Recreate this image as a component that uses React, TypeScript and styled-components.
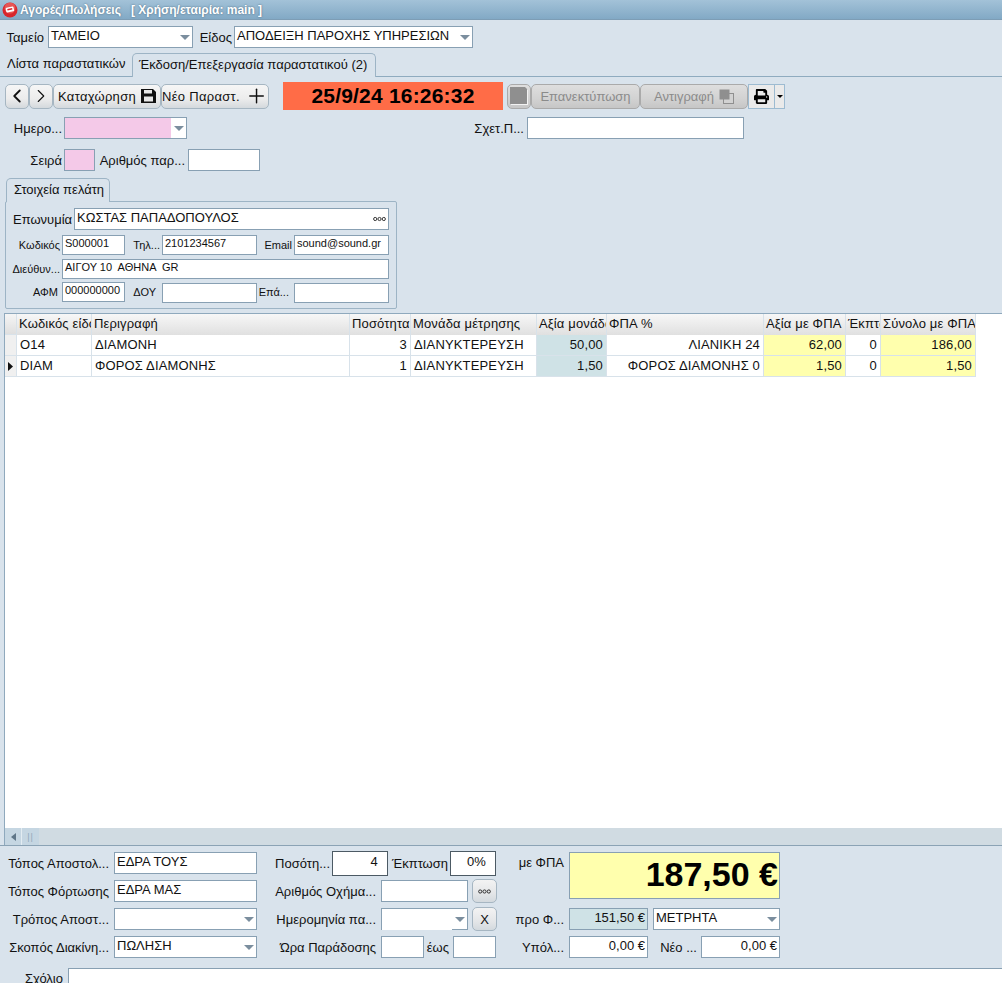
// Import libraries
import React from "react";
import styled, { createGlobalStyle } from "styled-components";
import { ChevronLeft, ChevronRight, Plus } from "lucide-react";
import { FaPrint } from "react-icons/fa";

// Styles
const GlobalStyle = createGlobalStyle`
  html, body {
    margin: 0;
    padding: 0;
    height: 983px;
    overflow: hidden;
    background: #d9e3ec;
    font-family: "Liberation Sans", Arial, sans-serif;
    font-size: 13px;
    color: #111;
  }
  * { box-sizing: border-box; }
`;

const Page = styled.div`
  width: 1002px;
  height: 983px;
  display: flex;
  flex-direction: column;
  overflow: hidden;
`;

const TitleBar = styled.div`
  height: 20px;
  flex: none;
  display: flex;
  align-items: center;
  gap: 2px;
  padding-left: 2px;
  background: linear-gradient(#a3c2d8, #82a9c5);
  border-bottom: 1px solid #7d9db5;
  color: #fff;
  font-size: 12px;
  font-weight: bold;
  white-space: pre;
  text-shadow: 0 0 2px #44647c;
`;

const FieldRow = styled.div<{ $top?: number; $left?: number }>`
  display: flex;
  flex: none;
  align-items: center;
  margin-top: ${(p) => p.$top ?? 0}px;
  margin-left: ${(p) => p.$left ?? 0}px;
`;

const Label = styled.span<{ $w?: number; $size?: number; $ml?: number }>`
  flex: none;
  width: ${(p) => (p.$w ? `${p.$w}px` : "auto")};
  margin-left: ${(p) => p.$ml ?? 0}px;
  text-align: right;
  font-size: ${(p) => p.$size ?? 13}px;
  white-space: nowrap;
`;

const Input = styled.div<{
  $w: number;
  $h?: number;
  $ml?: number;
  $mt?: number;
  $bg?: string;
  $size?: number;
  $right?: boolean;
  $dark?: boolean;
}>`
  flex: none;
  position: relative;
  width: ${(p) => p.$w}px;
  height: ${(p) => p.$h ?? 22}px;
  margin-left: ${(p) => p.$ml ?? 0}px;
  margin-top: ${(p) => p.$mt ?? 0}px;
  padding: 0 ${(p) => (p.$right ? 2 : 1)}px 0 ${(p) => (p.$right ? 0 : 2)}px;
  background: ${(p) => p.$bg ?? "#fff"};
  border: 1px solid ${(p) => (p.$dark ? "#4c5a64" : "#88a0b3")};
  font-size: ${(p) => p.$size ?? 13}px;
  line-height: ${(p) => (p.$h ?? 22) - 5}px;
  text-align: ${(p) => (p.$right ? "right" : "left")};
  white-space: pre;
  overflow: hidden;
`;

const DateInput = styled(Input)`
  border-bottom: none;
  &::after {
    content: "";
    position: absolute;
    right: 0;
    bottom: 0;
    width: 15px;
    height: 1px;
    background: #88a0b3;
  }
`;

const Arrow = styled.i`
  position: absolute;
  right: 2px;
  top: 8px;
  width: 0;
  height: 0;
  border-left: 5px solid transparent;
  border-right: 5px solid transparent;
  border-top: 5px solid #7b8e9e;
`;

const PinkFill = styled.div<{ $w: number }>`
  position: absolute;
  left: 0;
  top: 0;
  bottom: 0;
  width: ${(p) => p.$w}px;
  background: #f4c9e8;
`;

const TabStrip = styled.div`
  height: 24px;
  margin-top: 5px;
  flex: none;
  display: flex;
  align-items: flex-end;
  border-bottom: 1px solid #8fabbf;
  padding-left: 7px;
  white-space: nowrap;
`;

const PlainTab = styled.div`
  width: 125px;
  height: 23px;
  line-height: 22px;
`;

const ActiveTab = styled.div`
  height: 24px;
  width: 244px;
  line-height: 22px;
  padding-left: 6px;
  background: #d9e3ec;
  border: 1px solid #9db4c5;
  border-bottom: none;
  border-radius: 5px 5px 0 0;
  margin-bottom: -1px;
`;

const Toolbar = styled.div`
  display: flex;
  flex: none;
  align-items: center;
  height: 28px;
  margin-top: 5px;
  padding-left: 5px;
`;

const ToolButton = styled.button<{ $w: number; $disabled?: boolean }>`
  flex: none;
  width: ${(p) => p.$w}px;
  height: 25px;
  padding: 0;
  display: flex;
  align-items: center;
  justify-content: center;
  gap: 5px;
  font: 13px "Liberation Sans", Arial, sans-serif;
  letter-spacing: ${(p) => (p.$disabled ? 0 : 0.3)}px;
  white-space: nowrap;
  color: ${(p) => (p.$disabled ? "#8b8b8b" : "#111")};
  background: ${(p) =>
    p.$disabled
      ? "linear-gradient(#dedede, #d2d2d2 60%, #c6c6c6)"
      : "linear-gradient(#f6f6f6, #ececec 60%, #d4d9dd)"};
  border: 1px solid ${(p) => (p.$disabled ? "#aaaaaa" : "#a6b6c2")};
  border-radius: 5px;
`;

const Clock = styled.div`
  flex: none;
  width: 220px;
  height: 28px;
  margin: 0 4px 0 14px;
  background: #ff6c47;
  color: #000;
  font-size: 21px;
  font-weight: bold;
  letter-spacing: 0.2px;
  line-height: 27px;
  text-align: center;
`;

const PrintButton = styled.div`
  flex: none;
  width: 26px;
  height: 25px;
  display: flex;
  align-items: center;
  justify-content: center;
  background: #eaeaea;
  border: 1px solid #9dbbd1;
  border-right: none;
`;

const PrintMenu = styled.div`
  flex: none;
  width: 11px;
  height: 25px;
  display: flex;
  align-items: center;
  justify-content: center;
  background: #eaeaea;
  border: 1px solid #9dbbd1;
  &::after {
    content: "";
    border-left: 3px solid transparent;
    border-right: 3px solid transparent;
    border-top: 3px solid #000;
  }
`;

const CustomerTab = styled.div`
  flex: none;
  width: 104px;
  height: 24px;
  margin: 7px 0 -1px 6px;
  padding-left: 7px;
  line-height: 22px;
  background: #d9e3ec;
  border: 1px solid #9db4c5;
  border-bottom: none;
  border-radius: 5px 5px 0 0;
  position: relative;
  z-index: 1;
  white-space: nowrap;
`;

const CustomerPanel = styled.div`
  width: 392px;
  height: 108px;
  flex: none;
  margin-left: 5px;
  padding-top: 6px;
  border: 1px solid #9db4c5;
  border-radius: 2px;
`;

const Dots = styled.span`
  position: absolute;
  right: 2px;
  top: 50%;
  transform: translateY(-50%);
  display: flex;
`;

const Grid = styled.div`
  margin-top: 4px;
  flex: none;
  height: 532px;
  display: flex;
  flex-direction: column;
  background: #fff;
  border-top: 1px solid #8fa9bd;
  border-left: 1px solid #8fa9bd;
  margin-left: 4px;
`;

const GridBody = styled.div`
  flex: 1;
`;

const GridRow = styled.div`
  display: flex;
  height: 21px;
`;

const CornerCell = styled.div<{ $head?: boolean }>`
  flex: none;
  width: 12px;
  background: ${(p) =>
    p.$head ? "linear-gradient(#f5f5f5, #dfdfdf)" : "#f0f0f0"};
  border-right: 1px solid #d8e2ea;
  border-bottom: 1px solid #d8e2ea;
  display: flex;
  align-items: center;
  justify-content: center;
`;

const HeadCell = styled.div<{ $w: number }>`
  flex: none;
  width: ${(p) => p.$w}px;
  padding-left: 2px;
  background: linear-gradient(#f7f7f7, #e0e0e0);
  border-right: 1px solid #d8e2ea;
  line-height: 20px;
  letter-spacing: 0.15px;
  white-space: nowrap;
  overflow: hidden;
`;

const Cell = styled.div<{ $w: number; $right?: boolean; $bg?: string }>`
  flex: none;
  width: ${(p) => p.$w}px;
  padding: 0 3px;
  background: ${(p) => p.$bg ?? "#fff"};
  border-right: 1px solid #d8e2ea;
  border-bottom: 1px solid #d8e2ea;
  line-height: 20px;
  letter-spacing: 0.15px;
  text-align: ${(p) => (p.$right ? "right" : "left")};
  white-space: nowrap;
  overflow: hidden;
`;

const ScrollBar = styled.div`
  flex: none;
  height: 17px;
  display: flex;
  background: #d0dbe2;
`;

const ScrollArrow = styled.div`
  width: 17px;
  display: flex;
  align-items: center;
  justify-content: center;
  background: #c5d6e2;
  border-right: 1px solid #e3ecf2;
  &::after {
    content: "";
    border-top: 4px solid transparent;
    border-bottom: 4px solid transparent;
    border-right: 5px solid #5f7688;
  }
`;

const ScrollThumb = styled.div`
  width: 17px;
  display: flex;
  align-items: center;
  justify-content: center;
  background: #c5d6e2;
  color: #93a9b9;
  font-size: 9px;
  letter-spacing: 1px;
`;

const Footer = styled.div`
  flex: 1 0 0;
  min-height: 0;
  overflow: hidden;
  border-top: 1px solid #8ba3b5;
  display: flex;
  flex-direction: column;
  padding-top: 3px;
`;

const FooterColumns = styled.div`
  display: flex;
  flex: none;
  height: 119px;
`;

const FooterColumn = styled.div<{ $w: number }>`
  flex: none;
  width: ${(p) => p.$w}px;
  display: grid;
  grid-auto-rows: 28px;
  align-content: start;
`;

const SmallButton = styled.button`
  flex: none;
  width: 25px;
  height: 24px;
  margin-left: 4px;
  padding: 0;
  display: flex;
  align-items: center;
  justify-content: center;
  font: 13px "Liberation Sans", Arial, sans-serif;
  background: linear-gradient(#f3f3f3, #e4e6e8 60%, #d3d9de);
  border: 1px solid #a6b6c2;
  border-radius: 5px;
  color: #111;
`;

const TotalRow = styled.div`
  grid-row: span 2;
  display: flex;
  align-items: flex-start;
  padding-top: 3px;
`;

const TotalLabel = styled(Label)`
  padding-top: 3px;
`;

const TotalBox = styled.div`
  width: 211px;
  height: 47px;
  margin-left: 5px;
  padding-right: 1px;
  background: #ffffad;
  border: 1px solid #88a0b3;
  color: #000;
  font-size: 34px;
  font-weight: bold;
  line-height: 43px;
  text-align: right;
  white-space: nowrap;
`;

const CommentRow = styled.div`
  display: flex;
  flex: 1;
  min-height: 0;
`;

const CommentLabel = styled.span`
  width: 63px;
  padding-top: 3px;
  margin-right: 5px;
  text-align: right;
`;

const CommentBox = styled.div`
  flex: 1;
  background: #fff;
  border-top: 1px solid #88a0b3;
  border-left: 1px solid #88a0b3;
`;

// Data
const columns = [
  { title: "Κωδικός είδους", w: 75 },
  { title: "Περιγραφή", w: 258 },
  { title: "Ποσότητα", w: 61 },
  { title: "Μονάδα μέτρησης", w: 126 },
  { title: "Αξία μονάδας", w: 70 },
  { title: "ΦΠΑ %", w: 157 },
  { title: "Αξία με ΦΠΑ", w: 82 },
  { title: "Έκπτωση", w: 35 },
  { title: "Σύνολο με ΦΠΑ", w: 95 },
];

const rows = [
  ["Ο14", "ΔΙΑΜΟΝΗ", "3", "ΔΙΑΝΥΚΤΕΡΕΥΣΗ", "50,00", "ΛΙΑΝΙΚΗ 24", "62,00", "0", "186,00"],
  ["DIAM", "ΦΟΡΟΣ ΔΙΑΜΟΝΗΣ", "1", "ΔΙΑΝΥΚΤΕΡΕΥΣΗ", "1,50", "ΦΟΡΟΣ ΔΙΑΜΟΝΗΣ 0", "1,50", "0", "1,50"],
];

const rightAligned = [2, 4, 5, 6, 7, 8];
const cellColors: Record<number, string> = {
  4: "#cfe2e6",
  6: "#ffffad",
  8: "#ffffad",
};

// Small drawings
const Logo = () => (
  <svg width="16" height="16" viewBox="0 0 16 16">
    <circle cx="8" cy="8" r="7.5" fill="#d8262c" />
    <circle cx="8" cy="6" r="5.5" fill="#ee6a66" opacity="0.7" />
    <rect x="4" y="5" width="8" height="5" rx="1" fill="#fff" transform="rotate(-12 8 8)" />
    <rect x="5.5" y="6.5" width="5" height="1.5" fill="#d8262c" transform="rotate(-12 8 8)" />
  </svg>
);

const ThreeDots = () => (
  <svg width="13" height="5" viewBox="0 0 13 5">
    <circle cx="2.2" cy="2.5" r="1.6" fill="none" stroke="#222" strokeWidth="0.9" />
    <circle cx="6.5" cy="2.5" r="1.6" fill="none" stroke="#222" strokeWidth="0.9" />
    <circle cx="10.8" cy="2.5" r="1.6" fill="none" stroke="#222" strokeWidth="0.9" />
  </svg>
);

const SaveIcon = () => (
  <svg width="15" height="14" viewBox="0 0 15 14">
    <path d="M0 0h12l3 3v11H0z" fill="#111" />
    <rect x="3" y="1" width="8" height="3.5" fill="#e8e8e8" />
    <rect x="3" y="7.5" width="9" height="5" fill="#e8e8e8" />
  </svg>
);

const CopyIcon = () => (
  <svg width="15" height="15" viewBox="0 0 15 15">
    <rect x="0.5" y="0.5" width="10" height="10" fill="#8f8f8f" />
    <rect x="4.5" y="4.5" width="10" height="10" fill="#d2d2d2" stroke="#8f8f8f" />
    <rect x="4" y="4" width="6.5" height="6.5" fill="#8f8f8f" />
  </svg>
);

const DisabledDoc = () => (
  <svg width="18" height="18" viewBox="0 0 18 18">
    <path d="M0 0h15l2 2v15H0z" fill="#8f8f8f" />
    <path d="M17 3v14H1v1h17V3z" fill="#f2f2f2" />
  </svg>
);

const Caret = () => (
  <svg width="5" height="9" viewBox="0 0 5 9">
    <path d="M0 0l5 4.5L0 9z" fill="#111" />
  </svg>
);

// Component
const App: React.FC = () => {
  return (
    <Page>
      <GlobalStyle />
      <TitleBar>
        <Logo />
        <span>Αγορές/Πωλήσεις   [ Χρήση/εταιρία: main ]</span>
      </TitleBar>

      <FieldRow $top={6} $left={6}>
        <Label $w={38}>Ταμείο</Label>
        <Input $w={145} $ml={4}>
          ΤΑΜΕΙΟ
          <Arrow />
        </Input>
        <Label $w={33} $ml={6}>Είδος</Label>
        <Input $w={239} $ml={2}>
          ΑΠΟΔΕΙΞΗ ΠΑΡΟΧΗΣ ΥΠΗΡΕΣΙΩΝ
          <Arrow />
        </Input>
      </FieldRow>

      <TabStrip>
        <PlainTab>Λίστα παραστατικών</PlainTab>
        <ActiveTab>Έκδοση/Επεξεργασία παραστατικού (2)</ActiveTab>
      </TabStrip>

      <Toolbar>
        <ToolButton $w={24}>
          <ChevronLeft size={30} strokeWidth={2} />
        </ToolButton>
        <ToolButton $w={24}>
          <ChevronRight size={30} strokeWidth={1.2} />
        </ToolButton>
        <ToolButton $w={108}>
          Καταχώρηση <SaveIcon />
        </ToolButton>
        <ToolButton $w={108}>
          Νέο Παραστ. <Plus size={24} strokeWidth={1.5} />
        </ToolButton>
        <Clock>25/9/24 16:26:32</Clock>
        <ToolButton $w={24} $disabled>
          <DisabledDoc />
        </ToolButton>
        <ToolButton $w={109} $disabled>
          Επανεκτύπωση
        </ToolButton>
        <ToolButton $w={108} $disabled>
          Αντιγραφή <CopyIcon />
        </ToolButton>
        <PrintButton>
          <FaPrint size={15} color="#000" />
        </PrintButton>
        <PrintMenu />
      </Toolbar>

      <FieldRow $top={7}>
        <Label $w={62}>Ημερο...</Label>
        <Input $w={123} $ml={2}>
          <PinkFill $w={106} />
          <Arrow />
        </Input>
        <Label $w={337}>Σχετ.Π...</Label>
        <Input $w={217} $ml={3} />
      </FieldRow>

      <FieldRow $top={10}>
        <Label $w={62}>Σειρά</Label>
        <Input $w={31} $ml={2} $bg="#f4c9e8" />
        <Label $w={90}>Αριθμός παρ...</Label>
        <Input $w={72} $ml={3} />
      </FieldRow>

      <CustomerTab>Στοιχεία πελάτη</CustomerTab>
      <CustomerPanel>
        <FieldRow $left={7}>
          <Label $w={57}>Επωνυμία</Label>
          <Input $w={315} $ml={4}>
            ΚΩΣΤΑΣ ΠΑΠΑΔΟΠΟΥΛΟΣ
            <Dots>
              <ThreeDots />
            </Dots>
          </Input>
        </FieldRow>
        <FieldRow $top={5}>
          <Label $w={54} $size={11}>Κωδικός</Label>
          <Input $w={63} $h={20} $ml={2} $size={11}>S000001</Input>
          <Label $w={35} $size={11}>Τηλ...</Label>
          <Input $w={95} $h={20} $ml={2} $size={11}>2101234567</Input>
          <Label $w={35} $size={11}>Email</Label>
          <Input $w={95} $h={20} $ml={2} $size={11}>sound@sound.gr</Input>
        </FieldRow>
        <FieldRow $top={4}>
          <Label $w={54} $size={11}>Διεύθυν...</Label>
          <Input $w={327} $h={20} $ml={2} $size={11}>ΑΙΓΟΥ 10  ΑΘΗΝΑ  GR</Input>
        </FieldRow>
        <FieldRow $top={1}>
          <Label $w={52} $size={11}>ΑΦΜ</Label>
          <Input $w={63} $h={20} $ml={4} $size={11}>000000000</Input>
          <Label $w={31} $size={11}>ΔΟΥ</Label>
          <Input $w={95} $h={20} $ml={6} $mt={3} />
          <Label $w={32} $size={11}>Επά...</Label>
          <Input $w={95} $h={20} $ml={5} $mt={3} />
        </FieldRow>
      </CustomerPanel>

      <Grid>
        <GridBody>
          <GridRow>
            <CornerCell $head />
            {columns.map((c) => (
              <HeadCell key={c.title} $w={c.w}>
                {c.title}
              </HeadCell>
            ))}
          </GridRow>
          {rows.map((row, r) => (
            <GridRow key={row[0]}>
              <CornerCell>{r === 1 && <Caret />}</CornerCell>
              {row.map((value, i) => (
                <Cell
                  key={i}
                  $w={columns[i].w}
                  $right={rightAligned.includes(i)}
                  $bg={cellColors[i]}
                >
                  {value}
                </Cell>
              ))}
            </GridRow>
          ))}
        </GridBody>
        <ScrollBar>
          <ScrollArrow />
          <ScrollThumb>||</ScrollThumb>
        </ScrollBar>
      </Grid>

      <Footer>
        <FooterColumns>
          <FooterColumn $w={264}>
            <FieldRow>
              <Label $w={109}>Τόπος Αποστολ...</Label>
              <Input $w={143} $ml={5}>ΕΔΡΑ ΤΟΥΣ</Input>
            </FieldRow>
            <FieldRow>
              <Label $w={109}>Τόπος Φόρτωσης</Label>
              <Input $w={143} $ml={5}>ΕΔΡΑ ΜΑΣ</Input>
            </FieldRow>
            <FieldRow>
              <Label $w={109}>Τρόπος Αποστ...</Label>
              <Input $w={143} $ml={5}>
                <Arrow />
              </Input>
            </FieldRow>
            <FieldRow>
              <Label $w={109}>Σκοπός Διακίνη...</Label>
              <Input $w={143} $ml={5}>
                ΠΩΛΗΣΗ
                <Arrow />
              </Input>
            </FieldRow>
          </FooterColumn>

          <FooterColumn $w={238}>
            <FieldRow>
              <Label $w={66}>Ποσότη...</Label>
              <Input $w={56} $h={25} $ml={2} $right $dark>{"4  "}</Input>
              <Label $w={60}>Έκπτωση</Label>
              <Input $w={46} $h={25} $ml={2} $right $dark>{"0%  "}</Input>
            </FieldRow>
            <FieldRow>
              <Label $w={112}>Αριθμός Οχήμα...</Label>
              <Input $w={87} $ml={5} />
              <SmallButton>
                <ThreeDots />
              </SmallButton>
            </FieldRow>
            <FieldRow>
              <Label $w={112}>Ημερομηνία πα...</Label>
              <DateInput $w={87} $ml={5}>
                <Arrow />
              </DateInput>
              <SmallButton>X</SmallButton>
            </FieldRow>
            <FieldRow>
              <Label $w={112}>Ώρα Παράδοσης</Label>
              <Input $w={43} $ml={5} />
              <Label $w={25}>έως</Label>
              <Input $w={43} $ml={4} />
            </FieldRow>
          </FooterColumn>

          <FooterColumn $w={300}>
            <TotalRow>
              <TotalLabel $w={62}>με ΦΠΑ</TotalLabel>
              <TotalBox>187,50 €</TotalBox>
            </TotalRow>
            <FieldRow>
              <Label $w={62}>προ Φ...</Label>
              <Input $w={79} $ml={5} $right $bg="#cfe2e6">151,50 €</Input>
              <Input $w={127} $ml={5}>
                ΜΕΤΡΗΤΑ
                <Arrow />
              </Input>
            </FieldRow>
            <FieldRow>
              <Label $w={62}>Υπόλ...</Label>
              <Input $w={79} $ml={5} $right>0,00 €</Input>
              <Label $w={49}>Νέο ...</Label>
              <Input $w={79} $ml={4} $right>0,00 €</Input>
            </FieldRow>
          </FooterColumn>
        </FooterColumns>
        <CommentRow>
          <CommentLabel>Σχόλιο</CommentLabel>
          <CommentBox />
        </CommentRow>
      </Footer>
    </Page>
  );
};

export default App;
